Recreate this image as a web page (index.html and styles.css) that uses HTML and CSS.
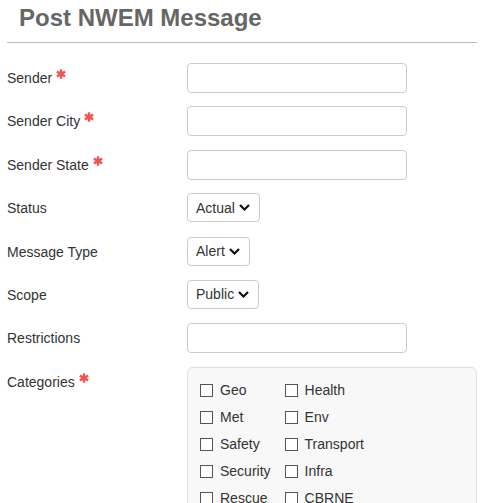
FILE: index.html
```html
<!DOCTYPE html>
<html>
<head>
<meta charset="utf-8">
<link rel="stylesheet" href="styles.css">
</head>
<body>
<div class="page">
  <h1 class="title">Post NWEM Message</h1>
  <hr class="rule">
  <form class="form">
    <div class="row">
      <label class="label">Sender <svg class="req" viewBox="0 0 10 10"><g stroke="#f05552" stroke-width="2.4" stroke-linecap="butt"><line x1="5" y1="0.3" x2="5" y2="9.7"/><line x1="0.9" y1="2.6" x2="9.1" y2="7.4"/><line x1="0.9" y1="7.4" x2="9.1" y2="2.6"/></g></svg></label>
      <input class="input" type="text">
    </div>
    <div class="row">
      <label class="label">Sender City <svg class="req" viewBox="0 0 10 10"><g stroke="#f05552" stroke-width="2.4"><line x1="5" y1="0.3" x2="5" y2="9.7"/><line x1="0.9" y1="2.6" x2="9.1" y2="7.4"/><line x1="0.9" y1="7.4" x2="9.1" y2="2.6"/></g></svg></label>
      <input class="input" type="text">
    </div>
    <div class="row">
      <label class="label">Sender State <svg class="req" viewBox="0 0 10 10"><g stroke="#f05552" stroke-width="2.4"><line x1="5" y1="0.3" x2="5" y2="9.7"/><line x1="0.9" y1="2.6" x2="9.1" y2="7.4"/><line x1="0.9" y1="7.4" x2="9.1" y2="2.6"/></g></svg></label>
      <input class="input" type="text">
    </div>
    <div class="row">
      <label class="label">Status</label>
      <div class="select"><span>Actual</span><svg class="chev" viewBox="0 0 11 7"><polyline points="1,1 5.5,5.5 10,1" fill="none" stroke="#111" stroke-width="2.2"/></svg></div>
    </div>
    <div class="row">
      <label class="label">Message Type</label>
      <div class="select"><span>Alert</span><svg class="chev" viewBox="0 0 11 7"><polyline points="1,1 5.5,5.5 10,1" fill="none" stroke="#111" stroke-width="2.2"/></svg></div>
    </div>
    <div class="row">
      <label class="label">Scope</label>
      <div class="select"><span>Public</span><svg class="chev" viewBox="0 0 11 7"><polyline points="1,1 5.5,5.5 10,1" fill="none" stroke="#111" stroke-width="2.2"/></svg></div>
    </div>
    <div class="row">
      <label class="label">Restrictions</label>
      <input class="input" type="text">
    </div>
    <div class="row">
      <label class="label">Categories <svg class="req" viewBox="0 0 10 10"><g stroke="#f05552" stroke-width="2.4"><line x1="5" y1="0.3" x2="5" y2="9.7"/><line x1="0.9" y1="2.6" x2="9.1" y2="7.4"/><line x1="0.9" y1="7.4" x2="9.1" y2="2.6"/></g></svg></label>
      <div class="panel">
        <div class="check"><span class="box"></span>Geo</div>
        <div class="check"><span class="box"></span>Health</div>
        <div class="check"><span class="box"></span>Met</div>
        <div class="check"><span class="box"></span>Env</div>
        <div class="check"><span class="box"></span>Safety</div>
        <div class="check"><span class="box"></span>Transport</div>
        <div class="check"><span class="box"></span>Security</div>
        <div class="check"><span class="box"></span>Infra</div>
        <div class="check"><span class="box"></span>Rescue</div>
        <div class="check"><span class="box"></span>CBRNE</div>
        <div class="check"><span class="box"></span>Fire</div>
        <div class="check"><span class="box"></span>Other</div>
      </div>
    </div>
  </form>
</div>
</body>
</html>
```

FILE: styles.css
```css
html, body {
  margin: 0;
  padding: 0;
  background: #fff;
}
body {
  font-family: "Liberation Sans", Arial, sans-serif;
  font-size: 14px;
  color: #333;
  overflow: hidden;
}
.page {
  width: 470px;
  padding: 0 7px;
}
.title {
  margin: 0;
  padding: 3px 0 0 12px;
  font-size: 24px;
  line-height: 30px;
  font-weight: bold;
  color: #666;
}
.rule {
  margin: 9px 0 0 0;
  border: 0;
  height: 1px;
  background: #bbb;
}
.form {
  margin-top: 20px;
  display: flex;
  flex-direction: column;
  gap: 13.4px;
}
.row {
  display: flex;
  align-items: flex-start;
}
.label {
  width: 180px;
  flex: none;
  line-height: 30px;
  height: 30px;
  white-space: nowrap;
}
.req {
  width: 10px;
  height: 10px;
  vertical-align: 4px;
}
.input {
  width: 220px;
  height: 30px;
  box-sizing: border-box;
  border: 1px solid #ccc;
  border-radius: 4px;
  margin: 0;
  padding: 0 8px;
  background: #fff;
  font: inherit;
}
.select {
  display: flex;
  align-items: center;
  gap: 4px;
  height: 29px;
  box-sizing: border-box;
  border: 1px solid #ccc;
  border-radius: 4px;
  padding: 0 9px 0 8px;
  color: #333;
  background: #fff;
}
.chev {
  width: 11px;
  height: 7px;
  display: block;
}
.panel {
  width: 290px;
  height: 200px;
  box-sizing: border-box;
  border: 1px solid #dedede;
  border-radius: 6px;
  background: #f8f8f8;
  padding: 9px 12px;
  display: grid;
  grid-template-columns: auto auto;
  justify-content: start;
  column-gap: 14px;
  grid-auto-rows: 27px;
  align-content: start;
}
.check {
  display: flex;
  align-items: center;
  gap: 7px;
  white-space: nowrap;
  color: #333;
}
.box {
  width: 13px;
  height: 13px;
  box-sizing: border-box;
  border: 1px solid #555;
  background: #fff;
  flex: none;
}
```
